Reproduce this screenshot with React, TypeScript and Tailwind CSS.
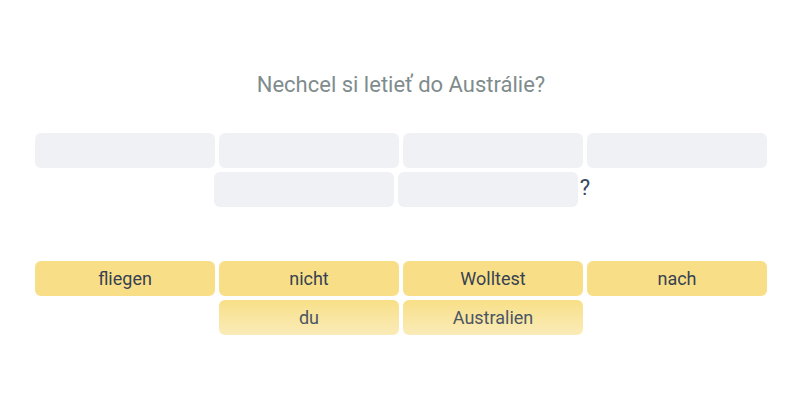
const slots = [0, 1, 2, 3, 4, 5];
const words = ["fliegen", "nicht", "Wolltest", "nach", "du", "Australien"];

function Slot() {
  return <div className="mx-0.5 my-0.5 h-[35px] w-[180px] rounded-md bg-[#f0f1f5]" />;
}

function Word({ text, faded }: { text: string; faded: boolean }) {
  return (
    <div
      className={
        faded
          ? "mx-0.5 my-0.5 flex h-[35px] w-[180px] items-center justify-center rounded-md bg-gradient-to-b from-[#f8df87] to-[#faecb8] text-lg text-[#4b5563]"
          : "mx-0.5 my-0.5 flex h-[35px] w-[180px] items-center justify-center rounded-md bg-[#f8df87] text-lg text-[#374151]"
      }
    >
      {text}
    </div>
  );
}

export default function App() {
  return (
    <main
      className="flex h-[400px] w-[800px] flex-col items-center bg-white pl-[2px] pt-[71px]"
      style={{ fontFamily: "Roboto, 'Noto Sans', sans-serif" }}
    >
      <h1 className="text-[22px] leading-[28px] text-[#7f8c8d]">Nechcel si letieť do Austrálie?</h1>

      <div className="mt-[32px] flex w-[740px] flex-wrap items-center justify-center">
        {slots.map((s) => (
          <Slot key={s} />
        ))}
        <span className="mb-[4px] text-[22px] text-[#34495e]">?</span>
      </div>

      <div className="mt-[50px] flex w-[740px] flex-wrap justify-center">
        {words.map((w, i) => (
          <Word key={w} text={w} faded={i >= 4} />
        ))}
      </div>
    </main>
  );
}
